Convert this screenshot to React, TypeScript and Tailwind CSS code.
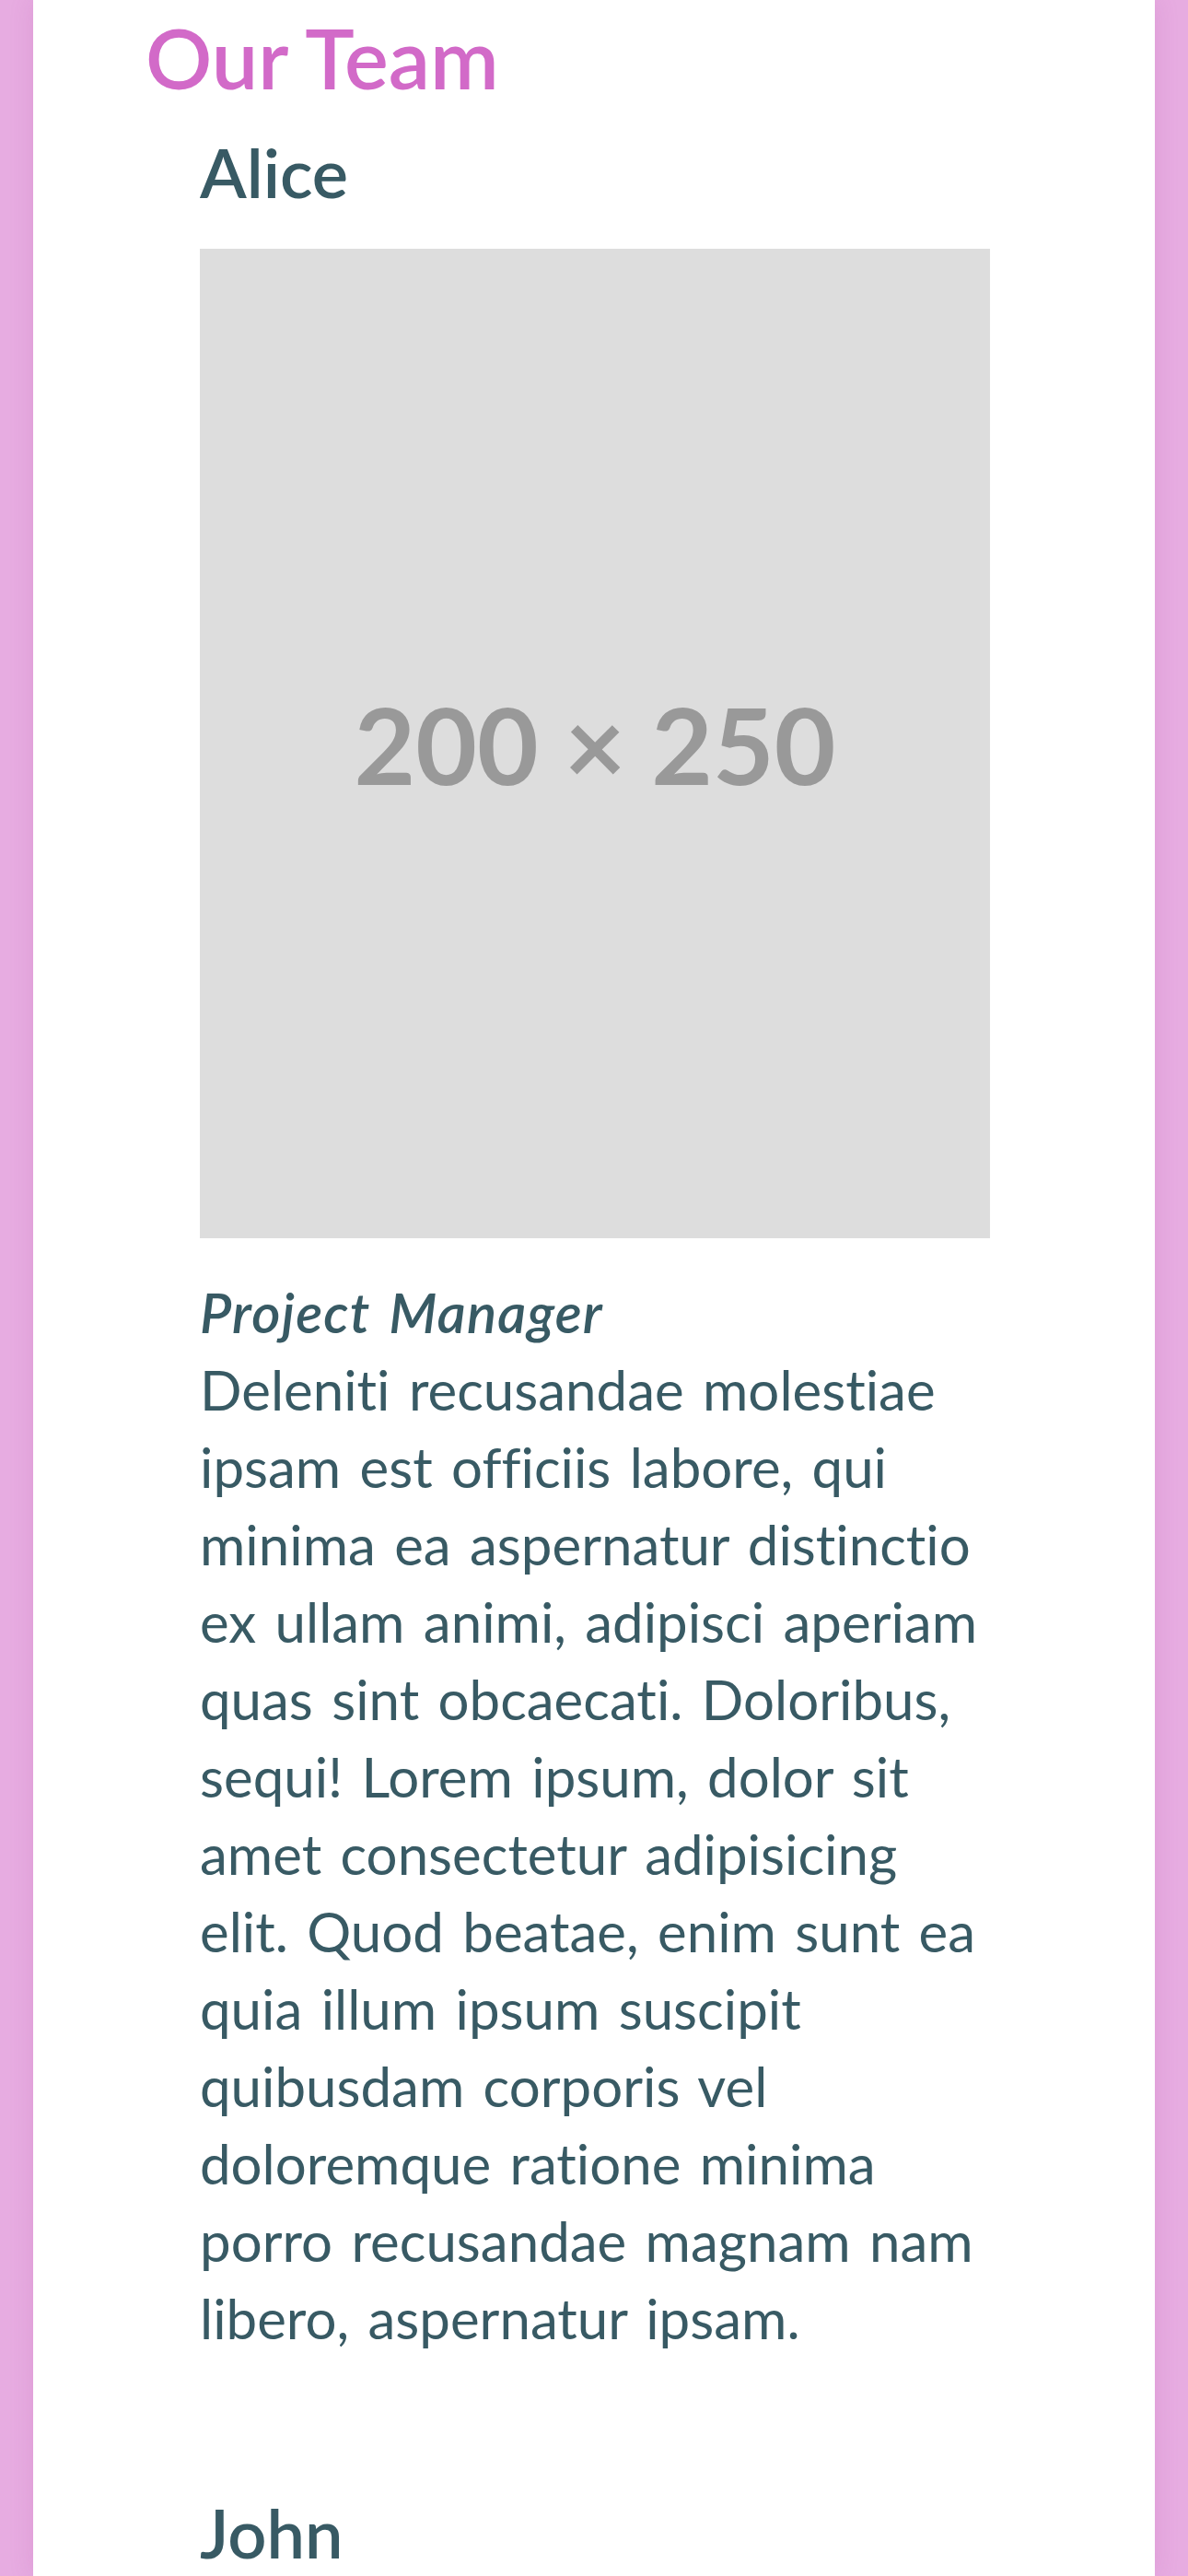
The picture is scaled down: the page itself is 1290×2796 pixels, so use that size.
const members = [
  {
    name: 'Alice',
    role: 'Project Manager',
    bio: 'Deleniti recusandae molestiae ipsam est officiis labore, qui minima ea aspernatur distinctio ex ullam animi, adipisci aperiam quas sint obcaecati. Doloribus, sequi! Lorem ipsum, dolor sit amet consectetur adipisicing elit. Quod beatae, enim sunt ea quia illum ipsum suscipit quibusdam corporis vel doloremque ratione minima porro recusandae magnam nam libero, aspernatur ipsam.',
  },
]

function Placeholder() {
  return (
    <div className="mt-[46px] flex h-[1074px] w-[858px] items-center justify-center bg-[#dddddd]">
      <span className="text-[115px] font-bold leading-none text-[#999999]">200 × 250</span>
    </div>
  )
}

export default function App() {
  return (
    <div className="min-h-screen bg-[#e7ace1] px-[36px] font-['Lato',sans-serif] text-[#385a64] [font-variant-ligatures:none]">
      <main className="min-h-screen bg-white pl-[122px] pt-[17px] shadow-[0_0_24px_rgba(170,80,160,0.18)]">
        <h1 className="text-[90px] font-semibold leading-none text-[#d26ac8]">Our Team</h1>

        {members.map((member) => (
          <section key={member.name} className="ml-[59px] mt-[43px] w-[858px]">
            <h2 className="text-[74px] font-semibold leading-none">{member.name}</h2>
            <Placeholder />
            <p className="mt-[38px] text-[60px] leading-[84px] [word-spacing:5px]">
              <em className="font-semibold tracking-[1.2px]">{member.role}</em>
              <br />
              {member.bio}
            </p>
          </section>
        ))}

        <section className="ml-[59px] mt-[154px] w-[858px]">
          <h2 className="text-[74px] font-semibold leading-none">John</h2>
        </section>
      </main>
    </div>
  )
}
